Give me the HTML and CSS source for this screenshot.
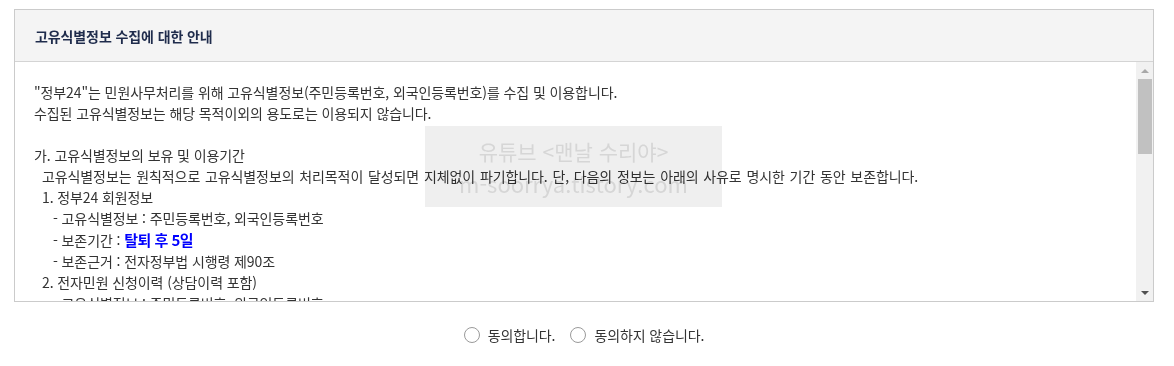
FILE: index.html
```html
<!DOCTYPE html>
<html lang="ko">
<head>
<meta charset="utf-8">
<title>고유식별정보 수집에 대한 안내</title>
<link rel="stylesheet" href="styles.css">
</head>
<body>
<div class="page">
  <section class="agree-box">
    <h2 class="agree-title">고유식별정보 수집에 대한 안내</h2>
    <div class="agree-frame">
      <div class="agree-body">
        <p class="ln">"정부24"는 민원사무처리를 위해 고유식별정보(주민등록번호, 외국인등록번호)를 수집 및 이용합니다.</p>
        <p class="ln">수집된 고유식별정보는 해당 목적이외의 용도로는 이용되지 않습니다.</p>
        <p class="ln blank">&nbsp;</p>
        <p class="ln">가. 고유식별정보의 보유 및 이용기간</p>
        <p class="ln i1 wide">고유식별정보는 원칙적으로 고유식별정보의 처리목적이 달성되면 지체없이 파기합니다. 단, 다음의 정보는 아래의 사유로 명시한 기간 동안 보존합니다.</p>
        <p class="ln i1">1. 정부24 회원정보</p>
        <p class="ln i2">- 고유식별정보 : 주민등록번호, 외국인등록번호</p>
        <p class="ln i2">- 보존기간 : <strong class="em">탈퇴 후 5일</strong></p>
        <p class="ln i2">- 보존근거 : 전자정부법 시행령 제90조</p>
        <p class="ln i1">2. 전자민원 신청이력 (상담이력 포함)</p>
        <p class="ln i2">- 고유식별정보 : 주민등록번호, 외국인등록번호</p>
        <p class="ln i2">- 보존기간 : 5년</p>
        <p class="ln i2">- 보존근거 : 전자정부법 시행령 제90조</p>
        <p class="ln i1">3. 전자민원 처리결과</p>
        <p class="ln i2">- 고유식별정보 : 주민등록번호, 외국인등록번호</p>
        <p class="ln i2">- 보존기간 : 민원사무 처리기준표에 따른 보존기간</p>
        <p class="ln i2">- 보존근거 : 민원 처리에 관한 법률 시행령 제2조</p>
        <p class="ln blank">&nbsp;</p>
        <p class="ln">나. 고유식별정보의 처리 근거</p>
        <p class="ln i1">전자정부법 시행령 제90조, 민원 처리에 관한 법률 시행령 제58조</p>
        <p class="ln blank">&nbsp;</p>
        <p class="ln">다. 동의를 거부할 권리 및 동의를 거부할 경우의 불이익</p>
        <p class="ln i1">귀하는 고유식별정보 수집 및 이용에 대한 동의를 거부할 권리가 있습니다.</p>
        <p class="ln i1">다만, 동의를 거부할 경우 민원 신청 등 서비스 이용이 제한될 수 있습니다.</p>
      </div>
      <div class="vscroll" aria-hidden="true">
        <span class="arrow up"></span>
        <span class="track"><span class="thumb"></span></span>
        <span class="arrow down"></span>
      </div>
    </div>
    <div class="watermark" aria-hidden="true">
      <span class="wm1">유튜브 &lt;맨날 수리야&gt;</span>
      <span class="wm2">m-soorrya.tistory.com</span>
    </div>
  </section>
  <div class="choice">
    <label class="radio"><input type="radio" name="agree1"><span class="dot"></span>동의합니다.</label>
    <label class="radio"><input type="radio" name="agree1"><span class="dot"></span>동의하지 않습니다.</label>
  </div>
</div>
</body>
</html>
```
FILE: styles.css
```css
html, body {
  margin: 0;
  padding: 0;
  background: #fff;
}
body {
  font-family: "Noto Sans CJK KR", "Noto Sans", "Liberation Sans", sans-serif;
  color: #333;
  font-size: 14px;
}
.page {
  padding: 9px 20px 0 14px;
}
.agree-box {
  position: relative;
  border: 1px solid #cbcbcb;
  background: #fff;
}
.agree-title {
  margin: 0;
  height: 51px;
  display: flex;
  align-items: center;
  padding: 0 20px;
  background: #f4f4f4;
  border-bottom: 1px solid #d4d4d4;
  font-size: 14px;
  font-weight: bold;
  letter-spacing: -0.1px;
  color: #1f2c4c;
}
.agree-frame {
  display: flex;
  height: 239px;
}
.agree-body {
  flex: 1;
  min-width: 0;
  overflow-y: auto;
  scrollbar-width: none;
  padding: 20px 19px;
  box-sizing: border-box;
}
.ln {
  margin: 0;
  line-height: 21px;
  white-space: nowrap;
  letter-spacing: -0.1px;
}
.ln.wide {
  word-spacing: 1px;
}
.i1 { padding-left: 8px; }
.i2 { padding-left: 19px; }
.em {
  color: #0000ff;
  font-size: 15px;
  font-weight: bold;
  letter-spacing: -0.5px;
  line-height: 21px;
}
.vscroll {
  width: 17px;
  flex: none;
  background: #f1f1f1;
  display: flex;
  flex-direction: column;
}
.arrow {
  height: 17px;
  flex: none;
  display: flex;
  align-items: center;
  justify-content: center;
}
.arrow::before {
  content: "";
  width: 0;
  height: 0;
  border-left: 4px solid transparent;
  border-right: 4px solid transparent;
}
.arrow.up::before {
  border-bottom: 4px solid #a8a8a8;
}
.arrow.down::before {
  border-top: 4px solid #505050;
}
.track {
  flex: 1;
  padding: 0 1px 0 2px;
}
.thumb {
  display: block;
  height: 75px;
  background: #c1c1c1;
}
.watermark {
  position: absolute;
  left: 410px;
  top: 116px;
  width: 297px;
  height: 81px;
  background: #efefef;
  mix-blend-mode: multiply;
  display: flex;
  flex-direction: column;
  align-items: center;
  justify-content: center;
  pointer-events: none;
  color: #d6d6d6;
}
.wm1 {
  font-size: 21px;
  line-height: 32px;
  margin-bottom: 1px;
}
.wm2 {
  font-size: 22px;
  line-height: 30px;
}
.choice {
  display: flex;
  justify-content: center;
  gap: 15px;
  margin-top: 23px;
}
.radio {
  display: flex;
  align-items: center;
  gap: 8px;
  font-size: 14px;
  letter-spacing: -0.1px;
  color: #333;
  cursor: pointer;
}
.radio input {
  position: absolute;
  opacity: 0;
  width: 0;
  height: 0;
}
.dot {
  width: 14px;
  height: 14px;
  border: 1.5px solid #9a9a9a;
  border-radius: 50%;
  background: #fff;
}
.radio input:checked + .dot {
  background: radial-gradient(circle, #1f2c4c 0 4px, #fff 4.5px);
}
```
